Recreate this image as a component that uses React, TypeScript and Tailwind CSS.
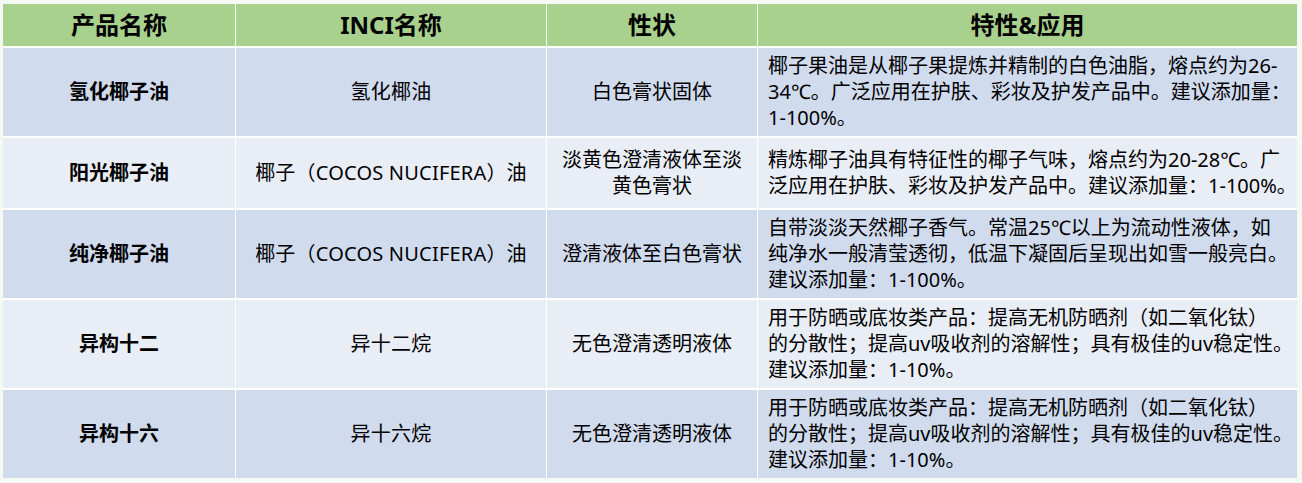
const rows = [
  {
    name: '氢化椰子油',
    inci: ['氢化椰油'],
    look: ['白色膏状固体'],
    desc: ['椰子果油是从椰子果提炼并精制的白色油脂，熔点约为26-', '34℃。广泛应用在护肤、彩妆及护发产品中。建议添加量：', '1-100%。'],
    bg: 'bg-[#d0dbee]',
  },
  {
    name: '阳光椰子油',
    inci: ['椰子（COCOS NUCIFERA）油'],
    look: ['淡黄色澄清液体至淡', '黄色膏状'],
    desc: ['精炼椰子油具有特征性的椰子气味，熔点约为20-28℃。广', '泛应用在护肤、彩妆及护发产品中。建议添加量：1-100%。'],
    bg: 'bg-[#e9edf6]',
  },
  {
    name: '纯净椰子油',
    inci: ['椰子（COCOS NUCIFERA）油'],
    look: ['澄清液体至白色膏状'],
    desc: ['自带淡淡天然椰子香气。常温25℃以上为流动性液体，如', '纯净水一般清莹透彻，低温下凝固后呈现出如雪一般亮白。', '建议添加量：1-100%。'],
    bg: 'bg-[#d0dbee]',
  },
  {
    name: '异构十二',
    inci: ['异十二烷'],
    look: ['无色澄清透明液体'],
    desc: ['用于防晒或底妆类产品：提高无机防晒剂（如二氧化钛）', '的分散性；提高uv吸收剂的溶解性；具有极佳的uv稳定性。', '建议添加量：1-10%。'],
    bg: 'bg-[#e9edf6]',
  },
  {
    name: '异构十六',
    inci: ['异十六烷'],
    look: ['无色澄清透明液体'],
    desc: ['用于防晒或底妆类产品：提高无机防晒剂（如二氧化钛）', '的分散性；提高uv吸收剂的溶解性；具有极佳的uv稳定性。', '建议添加量：1-10%。'],
    bg: 'bg-[#d0dbee]',
  },
];

const headers = ['产品名称', 'INCI名称', '性状', '特性&应用'];

function Lines({ lines }: { lines: string[] }) {
  return (
    <>
      {lines.map((l, i) => (
        <div key={i} className="whitespace-nowrap">
          {l}
        </div>
      ))}
    </>
  );
}

export default function App() {
  return (
    <div
      className="w-[1302px] h-[483px] bg-[#f5f9f3] pt-[4px] pl-[3px] text-black"
      style={{ fontFamily: '"Noto Sans", "Noto Sans CJK SC", sans-serif' }}
    >
      <div className="grid w-[1294px] grid-cols-[232px_310px_210px_539px] grid-rows-[42px_88px_70px_88px_88px_88px] gap-x-[1px] gap-y-[2px] bg-white">
        {headers.map((h) => (
          <div
            key={h}
            className="flex items-center justify-center bg-[#a9d18e] text-[24px] font-bold leading-none"
          >
            {h}
          </div>
        ))}
        {rows.map((r) => (
          <div key={r.name} className="contents">
            <div className={`flex items-center justify-center ${r.bg} text-[20px] font-bold`}>
              {r.name}
            </div>
            <div className={`flex flex-col items-center justify-center ${r.bg} text-[20px] leading-[26px] tracking-[0.2px]`}>
              <Lines lines={r.inci} />
            </div>
            <div className={`flex flex-col items-center justify-center ${r.bg} text-center text-[20px] leading-[26px]`}>
              <Lines lines={r.look} />
            </div>
            <div className={`flex flex-col justify-center ${r.bg} pl-[10px] text-[20px] leading-[26px]`}>
              <Lines lines={r.desc} />
            </div>
          </div>
        ))}
      </div>
    </div>
  );
}
